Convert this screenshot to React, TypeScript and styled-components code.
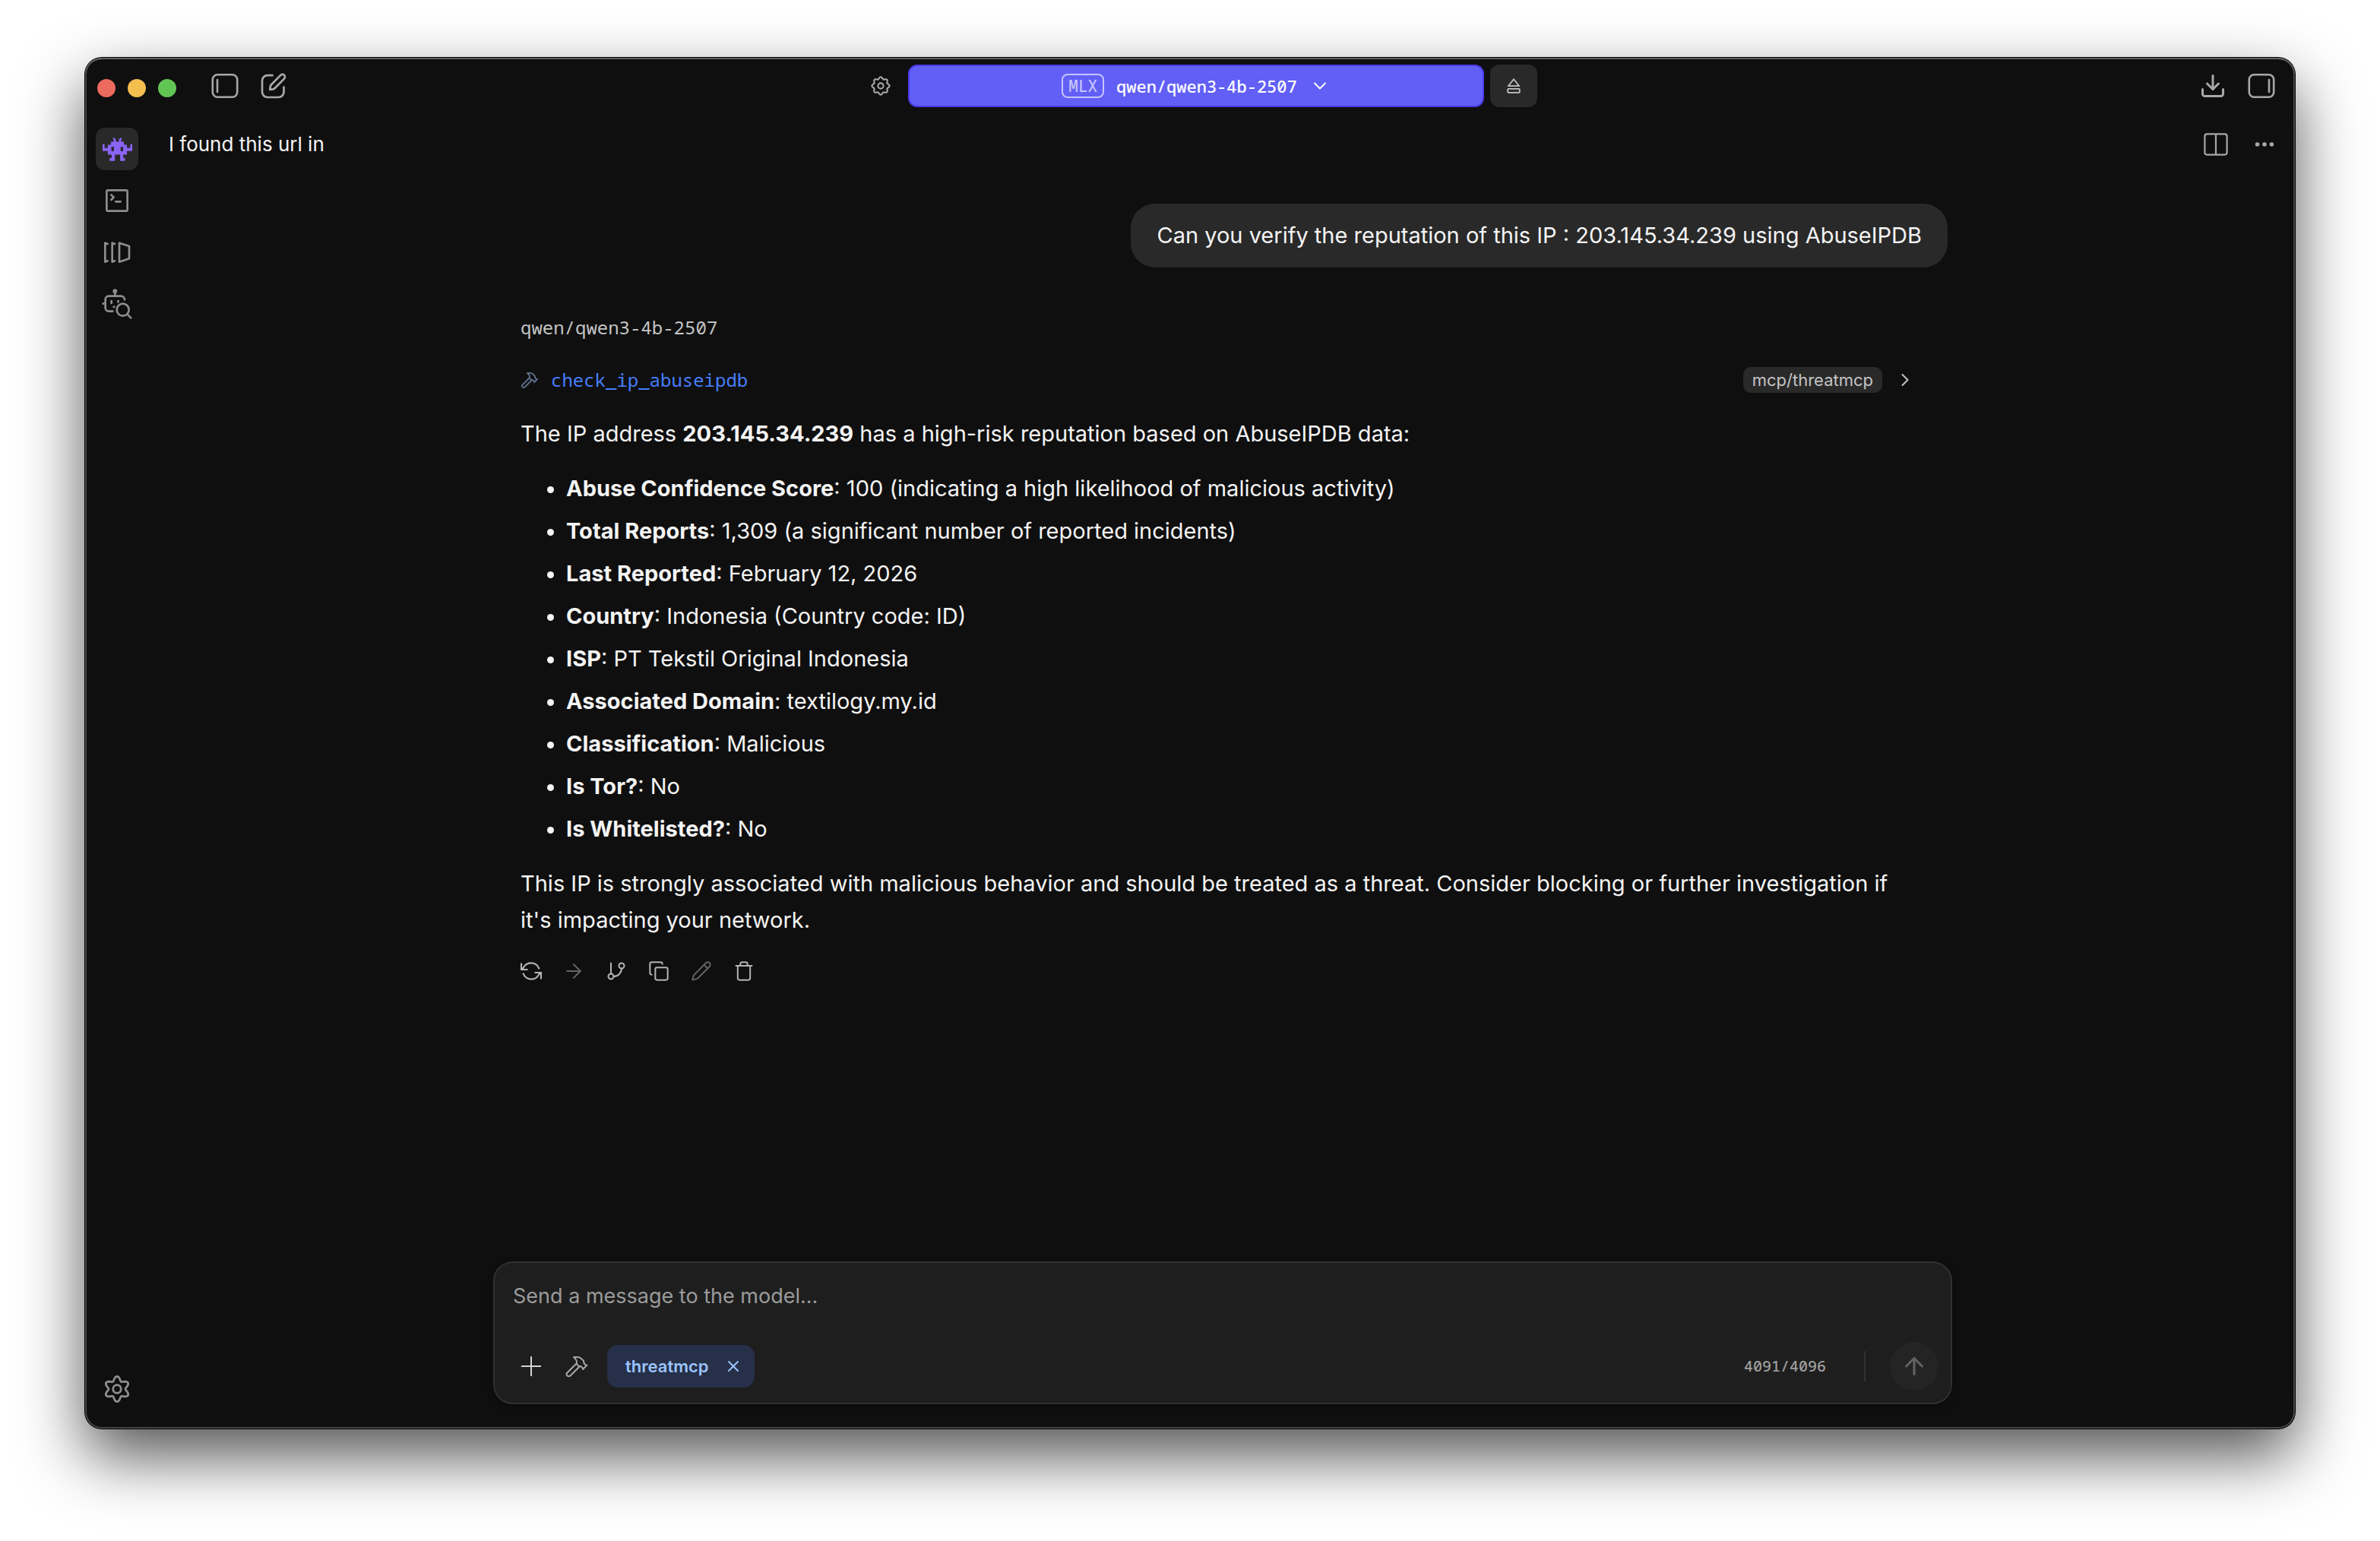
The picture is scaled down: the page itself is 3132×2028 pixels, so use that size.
import React from 'react';
import styled, { createGlobalStyle } from 'styled-components';
import {
  ArrowRight,
  ArrowUp,
  ChevronDown,
  ChevronRight,
  Copy,
  Download,
  GitBranch,
  Hammer,
  Pencil,
  Plus,
  Trash,
  X,
} from 'lucide-react';

const sans = "Inter, 'Liberation Sans', sans-serif";
const mono = "'Noto Sans Mono', 'DejaVu Sans Mono', monospace";

const color = {
  window: '#0f0f0f',
  raised: '#292929',
  composer: '#1e1e1e',
  line: '#303030',
  text: '#f4f4f4',
  soft: '#c4c4c4',
  icon: '#a8a8a8',
  rail: '#8e8e8e',
  faint: '#636363',
  accent: '#625ff7',
  accentLine: '#4b39ea',
  link: '#467efc',
};

const GlobalStyle = createGlobalStyle`
  * { box-sizing: border-box; }
  body { margin: 0; background: #fff; }
  button, textarea { font: inherit; color: inherit; }
`;

const Page = styled.div`
  display: flex;
  min-height: 100vh;
  padding: 76px 112px 148px;
  background: #fff;
  color: ${color.text};
  font-family: ${sans};
`;

const Window = styled.div`
  display: flex;
  flex: 1;
  flex-direction: column;
  min-width: 0;
  border-radius: 22px;
  background: ${color.window};
  box-shadow:
    inset 0 2px 0 #626262,
    inset 0 0 0 2px #464646,
    0 0 0 1px #000,
    0 36px 84px rgba(0, 0, 0, 0.68);
`;

const TitleBar = styled.header`
  display: grid;
  grid-template-columns: 1fr minmax(0, 914px) 1fr;
  align-items: center;
  height: 74px;
  padding: 0 16px;
`;

const BarSide = styled.div<{ $end?: boolean }>`
  display: flex;
  align-items: center;
  justify-content: ${(p) => (p.$end ? 'flex-end' : 'flex-start')};
  gap: 8px;
`;

const Lights = styled.div`
  display: flex;
  gap: 16px;
  margin-right: 28px;
  padding-top: 6px;
`;

const Light = styled.button<{ $fill: string }>`
  width: 24px;
  height: 24px;
  padding: 0;
  border: 0;
  border-radius: 50%;
  background: ${(p) => p.$fill};
`;

const IconButton = styled.button<{ $tone?: string; $active?: boolean }>`
  display: flex;
  flex: none;
  align-items: center;
  justify-content: center;
  width: 56px;
  height: 56px;
  padding: 0;
  border: 0;
  border-radius: 12px;
  background: ${(p) => (p.$active ? color.raised : 'transparent')};
  color: ${(p) => p.$tone ?? color.icon};
`;

const ModelBar = styled.div`
  display: flex;
  gap: 8px;
  padding-left: 22px;
`;

const ModelPicker = styled.button`
  display: flex;
  flex: 1;
  align-items: center;
  justify-content: center;
  gap: 16px;
  min-width: 0;
  height: 56px;
  border: 2px solid ${color.accentLine};
  border-radius: 12px;
  background: ${color.accent};
  color: #fff;
  font-family: ${mono};
  font-size: 22px;
  font-weight: 500;
  line-height: 28px;
`;

const Badge = styled.span`
  padding: 0 7px;
  border: 2px solid #c6c5fc;
  border-radius: 8px;
  color: #c6c5fc;
  font-size: 21px;
`;

const EjectButton = styled(IconButton)`
  width: 62px;
  background: ${color.raised};
  color: ${color.soft};
`;

const Body = styled.div`
  display: flex;
  flex: 1;
  min-height: 0;
`;

const Rail = styled.nav`
  display: flex;
  flex: none;
  flex-direction: column;
  align-items: center;
  gap: 12px;
  width: 86px;
  padding: 18px 2px 24px 0;
`;

const RailSpacer = styled.div`
  flex: 1;
`;

const Main = styled.main`
  display: flex;
  flex: 1;
  flex-direction: column;
  min-width: 0;
`;

const ChatHeader = styled.div`
  display: flex;
  align-items: center;
  gap: 8px;
  height: 80px;
  padding: 0 12px 0 24px;
`;

const ChatTitle = styled.h1`
  flex: 1;
  margin: 0;
  font-size: 26px;
  font-weight: 400;
  line-height: 40px;
`;

const Column = styled.div`
  width: 100%;
  max-width: 1920px;
  margin: 0 auto;
`;

const Thread = styled(Column)`
  display: flex;
  flex: 1;
  flex-direction: column;
  padding: 38px 6px 0 36px;
`;

const UserBubble = styled.div`
  align-self: flex-end;
  padding: 18px 34px;
  border-radius: 32px;
  background: ${color.raised};
  font-size: 29px;
  line-height: 48px;
`;

const Reply = styled.article`
  margin-top: 63px;
  padding-right: 42px;
  font-size: 29px;
  line-height: 48px;
`;

const Author = styled.div`
  color: ${color.soft};
  font-family: ${mono};
  font-size: 24px;
  line-height: 32px;
`;

const ToolCall = styled.button`
  display: flex;
  align-items: center;
  width: 100%;
  height: 34px;
  margin: 36px 0 30px;
  padding: 0;
  border: 0;
  background: none;
  color: ${color.soft};
  text-align: left;
`;

const ToolIcon = styled.span`
  display: flex;
  margin-right: 16px;
  color: #5a6c88;
`;

const ToolName = styled.span`
  flex: 1;
  color: ${color.link};
  font-family: ${mono};
  font-size: 24px;
  line-height: 32px;
`;

const ServerTag = styled.span`
  margin-right: 16px;
  padding: 0 12px;
  border-radius: 10px;
  background: ${color.raised};
  font-size: 22px;
  line-height: 34px;
`;

const Prose = styled.div`
  display: flex;
  flex-direction: column;
  gap: 24px;
`;

const Paragraph = styled.p`
  margin: 0;
`;

const Facts = styled.ul`
  display: flex;
  flex-direction: column;
  gap: 8px;
  margin: 0;
  padding-left: 60px;
`;

const Actions = styled.div`
  display: flex;
  margin: 15px 0 0 -14px;
`;

const Composer = styled.form`
  width: 100%;
  max-width: 1920px;
  margin: 32px auto;
  padding: 24px 16px 16px;
  border: 2px solid ${color.line};
  border-radius: 26px;
  background: ${color.composer};
  box-shadow: 0 4px 12px rgba(0, 0, 0, 0.3);
`;

const MessageBox = styled.textarea`
  display: block;
  width: 100%;
  height: 80px;
  padding: 0 8px;
  border: 0;
  outline: 0;
  background: none;
  font-size: 27px;
  line-height: 40px;
  resize: none;

  &::placeholder {
    color: #9b9b9b;
  }
`;

const Tools = styled.div`
  display: flex;
  align-items: center;
  gap: 4px;
  height: 64px;
  padding-left: 4px;
`;

const ServerChip = styled.span`
  display: flex;
  align-items: center;
  gap: 20px;
  height: 56px;
  margin: 0 auto 0 8px;
  padding: 0 16px 0 24px;
  border-radius: 14px;
  background: #263048;
  color: #9bc4fd;
  font-size: 22px;
  font-weight: 600;
`;

const RemoveButton = styled.button`
  display: flex;
  padding: 0;
  border: 0;
  background: none;
`;

const TokenCount = styled.span`
  padding-right: 50px;
  border-right: 2px solid ${color.line};
  color: #a0a0a0;
  font-family: ${mono};
  font-size: 20px;
  font-weight: 500;
  line-height: 40px;
`;

const SendButton = styled(IconButton)`
  width: 64px;
  height: 64px;
  margin-left: 28px;
  border-radius: 50%;
  background: #242424;
  color: ${color.faint};
`;

function gearPath(teeth: number, radius: number, depth: number) {
  const steps = teeth * 16;
  const points = Array.from({ length: steps }, (_, i) => {
    const a = (i / steps) * Math.PI * 2;
    const wave = Math.cos(teeth * a);
    const r = radius + depth * wave;
    return `${(20 + r * Math.sin(a)).toFixed(2)} ${(20 - r * Math.cos(a)).toFixed(2)}`;
  });
  return `M${points.join('L')}Z`;
}

type GearProps = { teeth: number; radius: number; depth: number; hub: number; stroke: number };

function Gear({ teeth, radius, depth, hub, stroke }: GearProps) {
  return (
    <svg width="40" height="40" viewBox="0 0 40 40" fill="none" stroke="currentColor" strokeWidth={stroke} strokeLinejoin="round">
      <path d={gearPath(teeth, radius, depth)} />
      <circle cx="20" cy="20" r={hub} />
    </svg>
  );
}

function PanelIcon({ side }: { side: 'left' | 'right' }) {
  const x = side === 'left' ? 8 : 28;
  return (
    <svg width="36" height="32" viewBox="0 0 36 32" fill="none" stroke="currentColor" strokeWidth="2.6" strokeLinecap="round">
      <rect x="1.8" y="1.3" width="32.4" height="29.4" rx="6.5" />
      <path d={`M${x} 8v16`} />
    </svg>
  );
}

function ComposeIcon() {
  return (
    <svg width="34" height="34" viewBox="0 0 34 34" fill="none" stroke="currentColor" strokeWidth="2.7" strokeLinecap="round" strokeLinejoin="round">
      <path d="M15.5 3.2H9a7 7 0 0 0-7 7V25a7 7 0 0 0 7 7h14.5a7 7 0 0 0 7-7v-6.5" />
      <path d="M26.3 2.9a3.3 3.3 0 0 1 4.7 4.7L18.5 20.3a4 4 0 0 1-2 1.1l-4.3.5.6-4.2a4 4 0 0 1 1.1-2.2Z" />
    </svg>
  );
}

function SplitIcon() {
  return (
    <svg width="32" height="30" viewBox="0 0 32 30" fill="none" stroke="currentColor" strokeWidth="2.2">
      <rect x="1.4" y="1.4" width="29.2" height="27.2" rx="3" />
      <path d="M16 1.4v27.2" />
    </svg>
  );
}

function MoreIcon() {
  return (
    <svg width="26" height="8" viewBox="0 0 26 8" fill="currentColor">
      <circle cx="3.6" cy="4" r="2.8" />
      <circle cx="13" cy="4" r="2.8" />
      <circle cx="22.4" cy="4" r="2.8" />
    </svg>
  );
}

function EjectIcon() {
  return (
    <svg width="18" height="20" viewBox="0 0 18 20" fill="none" stroke="currentColor" strokeWidth="1.8" strokeLinejoin="round">
      <path d="M9 1.2 16.2 10.2H1.8Z" />
      <rect x="1.2" y="13.8" width="15.6" height="5" rx="1" />
    </svg>
  );
}

function AlienIcon() {
  return (
    <svg width="39" height="31" viewBox="133 362 118 93" fill="currentColor">
      <path
        fillRule="evenodd"
        d="M174 363h8v5h4v10h12v-10h4v-5h8v5h-3v10h11v12h12v13h13v-15h8v27h-21v15h-15v13h7v12h-19v-25h-21v25h-21v-12h8v-13h-15v-15h-21v-27h8v15h13v-13h12v-12h11v-10h-4ZM168 399v17h10v-17ZM205 399v17h10v-17Z"
      />
    </svg>
  );
}

function ConsoleIcon() {
  return (
    <svg width="30" height="30" viewBox="147 567 90 90" fill="none" stroke="currentColor" strokeWidth="8" strokeLinecap="round" strokeLinejoin="round">
      <rect x="151" y="571" width="82" height="82" rx="6" />
      <path d="M169 589l10 10-10 10M187 616h19" />
    </svg>
  );
}

function LibraryIcon() {
  return (
    <svg width="36" height="30" viewBox="139 772 108 90" fill="none" stroke="currentColor" strokeWidth="8" strokeLinecap="round" strokeLinejoin="round">
      <path d="M156 784l-10-4v75l10-4M184 784l-10-4v75l10-4M202 780l39 13v49l-39 13Z" />
    </svg>
  );
}

function DiscoverIcon() {
  return (
    <svg width="40" height="40" viewBox="133 961 120 120" fill="none" stroke="currentColor" strokeWidth="8" strokeLinecap="round" strokeLinejoin="round">
      <circle cx="185" cy="971" r="5" fill="currentColor" />
      <path d="M185 974v14M176 1050h-16a13 13 0 0 1-13-13v-34a13 13 0 0 1 13-13h48a15 15 0 0 1 15 14M138 1020h6M171 1009v9M198 1009l-1 4M180 1033l2-1" />
      <circle cx="216" cy="1044" r="24" />
      <path d="M234 1062l14 14" />
    </svg>
  );
}

function RegenerateIcon() {
  return (
    <svg width="30" height="26" viewBox="0 0 30 26" fill="none" stroke="currentColor" strokeWidth="2.1" strokeLinecap="square">
      <path d="M25.3 9.5A11.2 11.2 0 0 0 4.8 8.6L2.5 10.8M2 3.5v7.5h7.5" />
      <path d="M4.7 16.5A11.2 11.2 0 0 0 25.2 17.4L27.5 15.2M28 22.5v-7.5h-7.5" />
    </svg>
  );
}

const facts = [
  ['Abuse Confidence Score', '100 (indicating a high likelihood of malicious activity)'],
  ['Total Reports', '1,309 (a significant number of reported incidents)'],
  ['Last Reported', 'February 12, 2026'],
  ['Country', 'Indonesia (Country code: ID)'],
  ['ISP', 'PT Tekstil Original Indonesia'],
  ['Associated Domain', 'textilogy.my.id'],
  ['Classification', 'Malicious'],
  ['Is Tor?', 'No'],
  ['Is Whitelisted?', 'No'],
];

const actions = [
  { label: 'Regenerate', icon: <RegenerateIcon /> },
  { label: 'Continue', icon: <ArrowRight size={30} strokeWidth={2} absoluteStrokeWidth />, faint: true },
  { label: 'Branch', icon: <GitBranch size={28} strokeWidth={2} absoluteStrokeWidth /> },
  { label: 'Copy', icon: <Copy size={28} strokeWidth={2} absoluteStrokeWidth /> },
  { label: 'Edit', icon: <Pencil size={28} strokeWidth={2} absoluteStrokeWidth />, faint: true },
  { label: 'Delete', icon: <Trash size={28} strokeWidth={2} absoluteStrokeWidth /> },
];

export default function App() {
  return (
    <Page>
      <GlobalStyle />
      <Window>
        <TitleBar>
          <BarSide>
            <Lights>
              <Light $fill="#ec6a5e" aria-label="Close" />
              <Light $fill="#f4bf4f" aria-label="Minimize" />
              <Light $fill="#61c554" aria-label="Zoom" />
            </Lights>
            <IconButton aria-label="Toggle sidebar">
              <PanelIcon side="left" />
            </IconButton>
            <IconButton aria-label="New chat">
              <ComposeIcon />
            </IconButton>
          </BarSide>
          <ModelBar>
            <IconButton aria-label="Model settings">
              <Gear teeth={8} radius={10.4} depth={1.2} hub={3.6} stroke={2.1} />
            </IconButton>
            <ModelPicker>
              <Badge>MLX</Badge>
              qwen/qwen3-4b-2507
              <ChevronDown size={28} strokeWidth={2} absoluteStrokeWidth />
            </ModelPicker>
            <EjectButton aria-label="Eject model">
              <EjectIcon />
            </EjectButton>
          </ModelBar>
          <BarSide $end>
            <IconButton aria-label="Downloads">
              <Download size={36} strokeWidth={3} absoluteStrokeWidth />
            </IconButton>
            <IconButton aria-label="Toggle side panel">
              <PanelIcon side="right" />
            </IconButton>
          </BarSide>
        </TitleBar>
        <Body>
          <Rail>
            <IconButton $active $tone="#8b64f6" aria-label="Chat">
              <AlienIcon />
            </IconButton>
            <IconButton $tone={color.rail} aria-label="Developer">
              <ConsoleIcon />
            </IconButton>
            <IconButton $tone={color.rail} aria-label="My models">
              <LibraryIcon />
            </IconButton>
            <IconButton $tone={color.rail} aria-label="Discover">
              <DiscoverIcon />
            </IconButton>
            <RailSpacer />
            <IconButton $tone={color.rail} aria-label="Settings">
              <Gear teeth={6} radius={13.8} depth={2.8} hub={5.3} stroke={2.8} />
            </IconButton>
          </Rail>
          <Main>
            <ChatHeader>
              <ChatTitle>I found this url in</ChatTitle>
              <IconButton aria-label="Split view">
                <SplitIcon />
              </IconButton>
              <IconButton aria-label="More">
                <MoreIcon />
              </IconButton>
            </ChatHeader>
            <Thread>
              <UserBubble>
                Can you verify the reputation of this IP : 203.145.34.239 using AbuseIPDB
              </UserBubble>
              <Reply>
                <Author>qwen/qwen3-4b-2507</Author>
                <ToolCall>
                  <ToolIcon>
                    <Hammer size={24} strokeWidth={2} absoluteStrokeWidth />
                  </ToolIcon>
                  <ToolName>check_ip_abuseipdb</ToolName>
                  <ServerTag>mcp/threatmcp</ServerTag>
                  <ChevronRight size={28} strokeWidth={2} absoluteStrokeWidth />
                </ToolCall>
                <Prose>
                  <Paragraph>
                    The IP address <strong>203.145.34.239</strong> has a high-risk reputation based
                    on AbuseIPDB data:
                  </Paragraph>
                  <Facts>
                    {facts.map(([name, value]) => (
                      <li key={name}>
                        <strong>{name}</strong>: {value}
                      </li>
                    ))}
                  </Facts>
                  <Paragraph>
                    This IP is strongly associated with malicious behavior and should be treated as
                    a threat. Consider blocking or further investigation if it's impacting your
                    network.
                  </Paragraph>
                </Prose>
                <Actions>
                  {actions.map((a) => (
                    <IconButton
                      key={a.label}
                      aria-label={a.label}
                      $tone={a.faint ? color.faint : '#b4b4b4'}
                    >
                      {a.icon}
                    </IconButton>
                  ))}
                </Actions>
              </Reply>
            </Thread>
            <Composer>
              <MessageBox aria-label="Message" placeholder="Send a message to the model..." />
              <Tools>
                <IconButton type="button" $tone="#d4d4d4" aria-label="Attach">
                  <Plus size={42} strokeWidth={2} absoluteStrokeWidth />
                </IconButton>
                <IconButton type="button" aria-label="Integrations">
                  <Hammer size={32} strokeWidth={2} absoluteStrokeWidth />
                </IconButton>
                <ServerChip>
                  threatmcp
                  <RemoveButton type="button" aria-label="Remove threatmcp">
                    <X size={24} strokeWidth={2} absoluteStrokeWidth />
                  </RemoveButton>
                </ServerChip>
                <TokenCount>4091/4096</TokenCount>
                <SendButton type="submit" aria-label="Send">
                  <ArrowUp size={36} strokeWidth={3} absoluteStrokeWidth />
                </SendButton>
              </Tools>
            </Composer>
          </Main>
        </Body>
      </Window>
    </Page>
  );
}
